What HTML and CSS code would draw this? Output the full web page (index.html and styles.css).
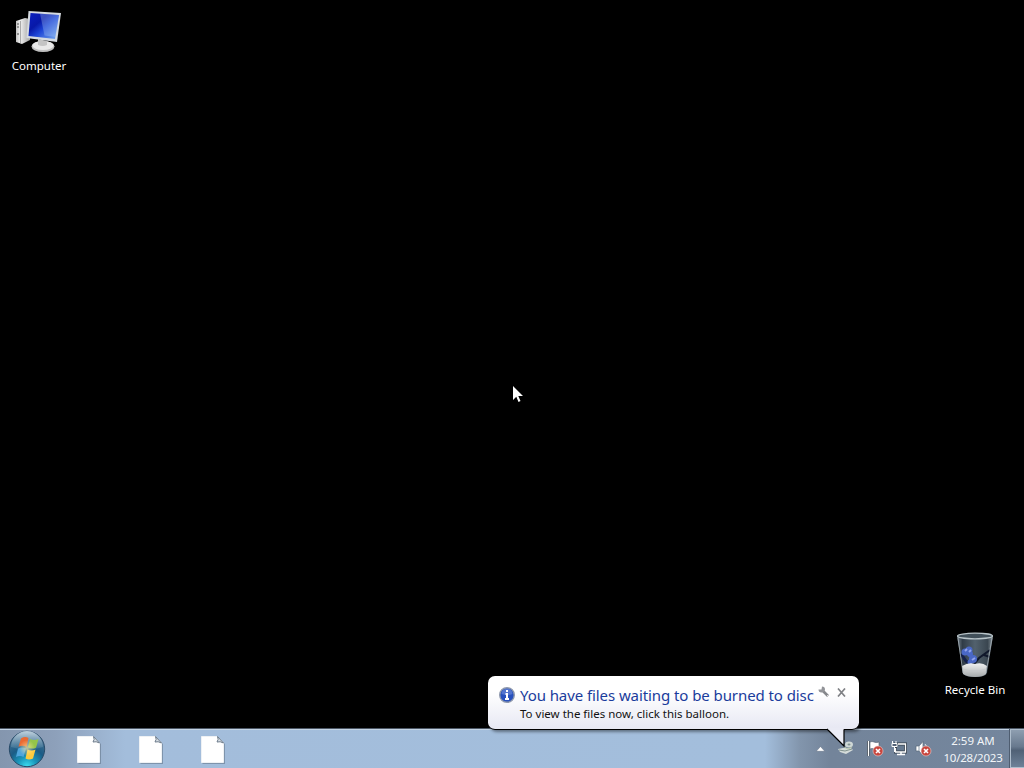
FILE: index.html
```html
<!DOCTYPE html>
<html lang="en">
  <head>
    <meta charset="utf-8" />
    <title>Desktop</title>
    <link rel="stylesheet" href="styles.css">
  </head>
  <body>
    <main class="desktop">
      <div class="shortcut computer">
        <svg width="46" height="42" viewBox="0 0 46 42">
          <defs>
            <linearGradient id="screen" x1="0" y1="0" x2="1" y2="1">
              <stop offset="0" stop-color="#0a1fc0" />
              <stop offset="0.35" stop-color="#0718a8" />
              <stop offset="0.55" stop-color="#1d45d6" />
              <stop offset="1" stop-color="#7fb2f0" />
            </linearGradient>
            <linearGradient id="tower" x1="0" y1="0" x2="1" y2="0">
              <stop offset="0" stop-color="#c2c2c2" />
              <stop offset="0.3" stop-color="#f0f0f0" />
              <stop offset="1" stop-color="#a4a4a4" />
            </linearGradient>
          </defs>
          <path d="M0 10l9-3 5 1v21l-8 4-6-2z" fill="url(#tower)" />
          <path d="M4.500 10v22" stroke="#aaa" />
          <path d="M1 13h2M1 16h2" stroke="#555" />
          <circle cx="2" cy="23" r="1" fill="#777" />
          <ellipse cx="27" cy="35.500" rx="11.500" ry="5.500" fill="#bfbfbf" />
          <ellipse cx="27" cy="34.500" rx="10.500" ry="4.500" fill="#e9e9e9" />
          <path d="M22 28l9 2v4q-4 2-9 0z" fill="#c4c4c4" />
          <path d="M12.500 0l32.500 2-4 29-30.500-4z" fill="#d5dae0" />
          <path d="M14.500 2l28.500 2-4 24-26.500-3z" fill="url(#screen)" />
          <path d="M24 2.600l19 1.400-3.500 22-11-1.500z" fill="#b5d4fa" opacity="0.300" />
        </svg>
        <span>Computer</span>
      </div>

      <div class="shortcut recycle">
        <svg width="38" height="46" viewBox="0 0 38 46">
          <defs>
            <linearGradient id="glass" x1="0" y1="0" x2="1" y2="0">
              <stop offset="0" stop-color="#77848d" />
              <stop offset="0.15" stop-color="#303c48" />
              <stop offset="0.5" stop-color="#52616d" />
              <stop offset="0.85" stop-color="#3a4650" />
              <stop offset="1" stop-color="#8b969d" />
            </linearGradient>
            <linearGradient id="paper" x1="0" y1="0" x2="0" y2="1">
              <stop offset="0" stop-color="#f0f1f1" />
              <stop offset="1" stop-color="#a4a8aa" />
            </linearGradient>
          </defs>
          <path d="M1 4h36l-6 37q-1 4-12 4T7 41z" fill="url(#glass)" />
          <path d="M34 18l-11 8-9 11M28 23l6 2" fill="none" stroke="#10182b" stroke-width="2" />
          <path d="M5 22l5 7 7 4" fill="none" stroke="#14204a" stroke-width="3" />
          <g fill="#4a68c6">
            <circle cx="9" cy="20" r="3.500" />
            <circle cx="13" cy="18" r="3.500" />
            <circle cx="14" cy="22" r="3" />
            <circle cx="17" cy="27" r="4" />
            <circle cx="14" cy="30" r="2.500" />
          </g>
          <path d="M9 19l2-2M13 20l2-2M16 28l3-2" stroke="#91a4ed" stroke-width="2" />
          <path d="M6 34q7-4 13-2 7-2 12 2l-1 8q-3 3-11 3t-12-3z" fill="url(#paper)" />
          <path d="M7 37q12 4 23 0" fill="none" stroke="#c5c8ca" />
          <ellipse cx="19" cy="4" rx="17.500" ry="2.800" fill="#42505a" stroke="#b8c3c8" stroke-width="1.300" />
          <path d="M2 6l5 35M36 6l-6 35" stroke="#aeb8be" opacity="0.700" />
        </svg>
        <span>Recycle Bin</span>
      </div>

      <svg class="cursor" width="12" height="19" viewBox="0 0 12 19">
        <path d="M1 1v14l3.300-3.300L6.500 17l2-1-2.200-5h4.700z" fill="#fff" />
      </svg>
    </main>

    <footer class="taskbar">
      <svg class="start" width="38" height="38" viewBox="0 0 38 38">
        <defs>
          <radialGradient id="orb" cx="0.5" cy="1" r="0.9">
            <stop offset="0" stop-color="#3fe0f2" />
            <stop offset="0.3" stop-color="#1a97bb" />
            <stop offset="0.6" stop-color="#1a5c86" />
            <stop offset="1" stop-color="#49708f" />
          </radialGradient>
          <linearGradient id="gloss" x1="0" y1="0" x2="0" y2="1">
            <stop offset="0" stop-color="#d7e5ee" stop-opacity="0.85" />
            <stop offset="1" stop-color="#8ab3c8" stop-opacity="0.15" />
          </linearGradient>
          <radialGradient id="glow">
            <stop offset="0" stop-color="#ffe9a0" stop-opacity="0.7" />
            <stop offset="1" stop-color="#ffe9a0" stop-opacity="0" />
          </radialGradient>
        </defs>
        <circle cx="19" cy="19" r="17.700" fill="url(#orb)" stroke="#284b69" />
        <path d="M3 17a16 16 0 0 1 32 0q-16 5-32 0z" fill="url(#gloss)" />
        <path d="M13 8.500q4-2.500 7.500-.5l-2 8.700q-4-2-8 0z" fill="#ea6a33" />
        <path d="M22 9q4 2 8.500 0l-2.500 8.700q-4 2-8-.5z" fill="#95c549" />
        <path d="M10 18.500q4-2 8 0l-2.500 8.500q-3.500-2-7.500 0z" fill="#4fa5dc" />
        <path d="M19.500 19.500q4 2 8 0L25 28.500q-4 2-7.500 0z" fill="#fccb3e" />
        <circle cx="19" cy="18" r="8" fill="url(#glow)" />
      </svg>

      <div class="pinned">
        <svg width="24" height="28" viewBox="0 0 24 28">
          <path d="M1.500 1.500H17L24 8v20H1.500z" fill="#66788c" opacity="0.600" />
          <path d="M0.500 0.500H16.500L22.500 7v19.500h-22z" fill="#fff" stroke="#eef1f4" />
          <path d="M16.500 0.500q1.500 3-.5 5.500 3-1 6.500 1z" fill="#d9e0e6" stroke="#6d7c8c" />
        </svg>
        <svg width="24" height="28" viewBox="0 0 24 28">
          <path d="M1.500 1.500H17L24 8v20H1.500z" fill="#66788c" opacity="0.600" />
          <path d="M0.500 0.500H16.500L22.500 7v19.500h-22z" fill="#fff" stroke="#eef1f4" />
          <path d="M16.500 0.500q1.500 3-.5 5.500 3-1 6.500 1z" fill="#d9e0e6" stroke="#6d7c8c" />
        </svg>
        <svg width="24" height="28" viewBox="0 0 24 28">
          <path d="M1.500 1.500H17L24 8v20H1.500z" fill="#66788c" opacity="0.600" />
          <path d="M0.500 0.500H16.500L22.500 7v19.500h-22z" fill="#fff" stroke="#eef1f4" />
          <path d="M16.500 0.500q1.500 3-.5 5.500 3-1 6.500 1z" fill="#d9e0e6" stroke="#6d7c8c" />
        </svg>
      </div>

      <div class="tray">
        <svg class="arrow" width="9" height="6" viewBox="0 0 9 6">
          <path d="M4.500 0.500L8.800 5.300H0.200z" fill="#fff" stroke="#5c6b7e" stroke-width="0.500" />
        </svg>
        <svg class="burner" width="16" height="16" viewBox="0 0 16 16">
          <ellipse cx="11" cy="4.500" rx="4" ry="3" fill="#cfd8d6" />
          <ellipse cx="11" cy="4.500" rx="1.500" ry="1" fill="#7f9190" />
          <path d="M0 9l5-1 8 0 2 2-7 4-6-2z" fill="#d5dcda" />
          <path d="M1 10l6 1 7-2" fill="none" stroke="#82938e" />
          <path d="M6 7l4 2 4-2" fill="none" stroke="#b6c3a9" />
        </svg>
        <svg class="flag" width="17" height="17" viewBox="0 0 17 17">
          <path d="M1.500 1v15" stroke="#36414e" stroke-width="3" />
          <path d="M3 2q2-1 4 0t5 0v7q-3 1-5 0t-4 0z" fill="#fff" stroke="#4c5a6a" stroke-width="0.600" />
          <path d="M1.500 1v15" stroke="#fff" stroke-width="1.400" />
          <circle cx="11" cy="11" r="5" fill="#c9463e" stroke="#ead0ce" stroke-width="0.600" />
          <path d="M9 9l4 4M13 9l-4 4" stroke="#fff" stroke-width="1.600" />
        </svg>
        <svg class="network" width="17" height="17" viewBox="0 0 17 17">
          <path d="M4.500 4h10v8h-10z" fill="#66798f" stroke="#35404d" stroke-width="3" />
          <path d="M7 4h7.500v8h-10V8" fill="none" stroke="#fff" stroke-width="1.300" />
          <path d="M6 14.500h8M10 12v2" stroke="#fff" stroke-width="1.500" />
          <path d="M1 3.500h5v3H1zM1.500 1v2M5 1v2M3.500 7v5" fill="#526176" stroke="#fff" />
        </svg>
        <svg class="volume" width="17" height="17" viewBox="0 0 17 17">
          <path d="M1 6h3l4-4.500v14L4 11H1z" fill="#fff" stroke="#56677a" stroke-width="0.700" />
          <path d="M4 6v5" stroke="#8d9aa8" />
          <path d="M10 4q2 2 2 5" fill="none" stroke="#dce3ea" />
          <circle cx="11" cy="11" r="5" fill="#c9463e" stroke="#ead0ce" stroke-width="0.600" />
          <path d="M9 9l4 4M13 9l-4 4" stroke="#fff" stroke-width="1.600" />
        </svg>
        <div class="clock">
          <span class="time">2:59 AM</span>
          <span class="date">10/28/2023</span>
        </div>
        <div class="show-desktop"></div>
      </div>
    </footer>

    <div class="balloon">
      <svg class="info" width="16" height="16" viewBox="0 0 16 16">
        <circle cx="8" cy="8" r="7.300" fill="#2851bd" stroke="#8f99ad" stroke-width="1.400" />
        <path d="M2.500 7a5.500 5.500 0 0 1 11 0q-5 2-11 0z" fill="#7e9ae1" opacity="0.500" />
        <path d="M8 3v2M6.500 7H8v5M6 12h4" fill="none" stroke="#fff" stroke-width="2" />
      </svg>
      <div class="message">
        <div class="title">You have files waiting to be burned to disc</div>
        <div class="text">To view the files now, click this balloon.</div>
      </div>
      <svg class="wrench" width="12" height="12" viewBox="0 0 12 12">
        <path d="M4.500 4.500l5.500 5.500" stroke="#85878b" stroke-width="2.600" />
        <path d="M4 0.500l-.5 3L0.500 3.500q0 3 3 3t3.500-3q0-3-3-3z" fill="#929498" />
        <path d="M9 9l1 1" stroke="#ddd" />
      </svg>
      <svg class="close" width="9" height="9" viewBox="0 0 9 9">
        <path d="M1 0.500l7 8M8 0.500l-7 8" stroke="#808286" stroke-width="1.700" />
      </svg>
      <svg class="tail" width="20" height="20" viewBox="0 0 20 20">
        <path d="M1 1l17 17V1" fill="#edeef7" stroke="#000" stroke-width="1.200" />
        <path d="M1.800 0h15.600v2H3z" fill="#e9eaf4" />
      </svg>
    </div>
  </body>
</html>
```
FILE: styles.css
```css
* {
  box-sizing: border-box;
}
body {
  margin: 0;
  height: 768px;
  display: flex;
  flex-direction: column;
  overflow: hidden;
  background: #000;
  color: #fff;
  font-family: "Noto Sans", "Open Sans", sans-serif;
  font-size: 12px;
}
svg {
  display: block;
  flex: none;
}
.desktop {
  flex: 1;
  position: relative;
}
.shortcut {
  position: absolute;
  width: 76px;
  display: flex;
  flex-direction: column;
  align-items: center;
  font-size: 11.5px;
  line-height: 16px;
  white-space: nowrap;
}
.computer {
  left: 1px;
  top: 11px;
}
.computer span {
  margin-top: 5px;
}
.recycle {
  left: 937px;
  top: 632px;
}
.recycle span {
  margin-top: 4px;
}
.cursor {
  position: absolute;
  left: 512px;
  top: 385px;
}

.taskbar {
  height: 40px;
  display: flex;
  align-items: center;
  border-top: 1px solid #4d5866;
  box-shadow: inset 0 1px #c3d3e4;
  background: linear-gradient(to right, #8496ae 0, #8da0ba 55px, #a3bddb 125px, #a3bedc 765px, #8295ac 800px, #73849a 830px, #74869d 100%);
}
.start {
  margin-left: 8px;
}
.pinned {
  display: flex;
  gap: 38px;
  margin-left: 31px;
  margin-top: 2px;
}
.tray {
  display: flex;
  align-items: center;
  height: 100%;
  margin-left: auto;
}
.burner {
  margin-left: 13px;
  margin-top: -2px;
}
.flag {
  margin-left: 13px;
}
.network,
.volume {
  margin-left: 7px;
}
.clock {
  width: 76px;
  margin-left: 3px;
  display: flex;
  flex-direction: column;
  align-items: center;
  color: #f2f5f8;
  font-size: 11.5px;
  line-height: 17px;
  white-space: nowrap;
}
.date {
  letter-spacing: -0.2px;
}
.show-desktop {
  width: 14px;
  height: 100%;
  margin-left: -1px;
  border: 1px solid #aebdcc;
  border-right: none;
  box-shadow: -1px 0 #4e5d70;
  background: linear-gradient(to bottom, #8e9eb0 0, #68798e 45%, #506176 55%, #6d8198 100%);
}

.balloon {
  position: absolute;
  left: 488px;
  top: 676px;
  width: 371px;
  height: 54px;
  display: flex;
  align-items: flex-start;
  padding: 10px 12px 0 11px;
  border-radius: 7px;
  border-bottom: 1px solid #000;
  background: linear-gradient(to bottom, #fff 0, #fff 30%, #e7e8f3 100%);
  box-shadow: 2px 2px 3px rgba(0, 0, 0, 0.4);
  color: #111;
}
.info {
  margin-top: 1px;
}
.message {
  width: 294px;
  margin-left: 5px;
  white-space: nowrap;
}
.title {
  color: #1a3c9c;
  font-size: 15px;
  line-height: 19px;
  letter-spacing: -0.08px;
}
.text {
  font-size: 11.5px;
  line-height: 18px;
}
.wrench {
  margin-left: 4px;
}
.close {
  margin-left: 7px;
  margin-top: 2px;
}
.tail {
  position: absolute;
  left: 338px;
  top: 52px;
}
```
